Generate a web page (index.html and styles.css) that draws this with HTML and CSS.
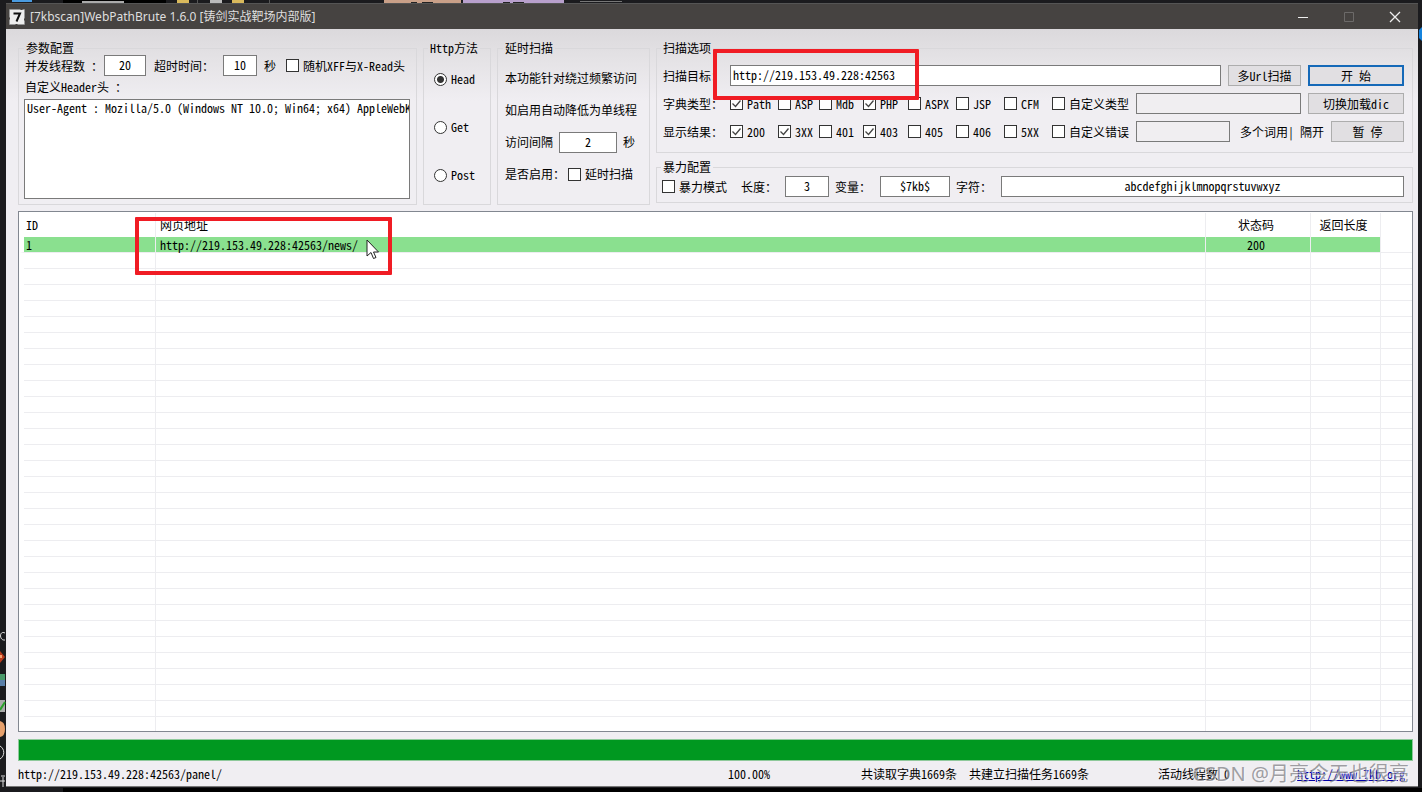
FILE: index.html
```html
<!DOCTYPE html>
<html lang="zh-CN">
<head>
<meta charset="utf-8">
<title>[7kbscan]WebPathBrute 1.6.0</title>
<link rel="stylesheet" href="styles.css">
</head>
<body>
<div class="desktop">
  <svg class="desk-top" width="700" height="3" aria-hidden="true">
    <path fill="#4a9be0" d="M12 0h20v2H12z"/><path fill="#000" d="M63 0h103v3H63z"/><path fill="#aaa" d="M82 1h42v2H82z"/>
    <path fill="#d9b95c" d="M177 0h12v3h-12zM232 0h12v3h-12z"/><path fill="#bbb" d="M210 0h12v3h-12z"/><path fill="#555" d="M197 0h1v3h-1zM269 0h1v3h-1z"/>
    <path fill="#c9a088" d="M384 0h77v3h-77z"/><path fill="#b8a0cc" d="M463 0h101v3H463z"/><path fill="#222" d="M411 2h6v1h-6zM422 2h11v1h-11zM503 2h7v1h-7zM513 2h11v1h-11z"/><path fill="#777" d="M580 1h42v1h-42z"/>
  </svg>
  <svg class="desk-left" width="6" height="200" viewBox="0 600 6 200" aria-hidden="true">
    <path fill="none" stroke="#ddd" d="M5 633C-1 630-1 641 5 640M0 746c5 3 5 10 0 13M1 776h4M0 781h5M3 777v10"/>
    <path fill="#b83b1d" d="M0 651l5 6-5 6z"/><path fill="#f5a070" d="M0 655h2v3H0z"/>
    <path fill="#4a9a6a" d="M0 674h5v6H0z"/><path fill="#5a7fa8" d="M0 680h5v6H0z"/>
    <path fill="#aaa" d="M0 700h5v12H0z"/><path fill="none" stroke="#2aa02a" stroke-width="2" d="M0 710l5-8"/>
    <path fill="#e6a06c" d="M0 721q5 1 5 8t-5 8z"/>
  </svg>
  <svg class="desk-right" width="4" height="20" aria-hidden="true"><path fill="#1583dd" d="M4 1L1 4v8l3 3z"/></svg>
  <div class="desk-bottom"></div>

  <main class="window">
    <header class="titlebar">
      <svg width="16" height="16" viewBox="0 0 16 16" aria-hidden="true"><path fill="#eee" d="M1 1h14v14H1z"/><path fill="none" stroke="#999" stroke-dasharray="11 2" d="M.5.5h15v15H.5z"/><path fill="none" stroke="#111" stroke-width="2" d="M4.500 4.500h6.500L7.500 12.500"/></svg>
      <h1 class="title">[7kbscan]WebPathBrute 1.6.0 [铸剑实战靶场内部版]</h1>
      <button class="winbtn" aria-label="最小化"><svg width="12" height="12"><path stroke="#eee" d="M1 6.500h10"/></svg></button>
      <button class="winbtn" aria-label="最大化" disabled><svg width="12" height="12"><path fill="none" stroke="#6c6a69" d="M1.500 1.500h9v9h-9z"/></svg></button>
      <button class="winbtn" aria-label="关闭"><svg width="12" height="12"><path stroke="#eee" stroke-width="1.300" d="M1 1l10 10M11 1L1 11"/></svg></button>
    </header>

    <div class="content">
      <div class="panels">
        <fieldset class="group params">
          <legend>参数配置</legend>
          <div class="row">
            <label class="lbl-threads" for="threads">并发线程数 ：</label>
            <input class="box center w42" id="threads" value="20">
            <label class="lbl-timeout" for="timeout">超时时间：</label>
            <input class="box center w34" id="timeout" value="10">
            <span class="unit">秒</span>
            <label class="opt"><input type="checkbox">随机XFF与X-Read头</label>
          </div>
          <label class="header-label" for="headers">自定义Header头 ：</label>
          <textarea class="headers" id="headers" wrap="off">User-Agent : Mozilla/5.0 (Windows NT 10.0; Win64; x64) AppleWebKit/537.36</textarea>
        </fieldset>

        <fieldset class="group methods">
          <legend>Http方法</legend>
          <label class="opt"><input type="radio" name="m" checked>Head</label>
          <label class="opt"><input type="radio" name="m">Get</label>
          <label class="opt"><input type="radio" name="m">Post</label>
        </fieldset>

        <fieldset class="group delay">
          <legend>延时扫描</legend>
          <p>本功能针对绕过频繁访问</p>
          <p>如启用自动降低为单线程</p>
          <div class="delay-row"><label for="gap">访问间隔</label><input class="box center w58" id="gap" value="2"><span>秒</span></div>
          <div class="delay-row delay-toggle"><span>是否启用：</span><label class="opt"><input type="checkbox">延时扫描</label></div>
        </fieldset>

        <div class="right-groups">
          <fieldset class="group scan">
            <legend>扫描选项</legend>
            <div class="row">
              <label class="name" for="target">扫描目标：</label>
              <input class="box grow" id="target" value="http://219.153.49.228:42563">
              <button class="btn narrow">多Url扫描</button>
              <button class="btn wide primary">开 始</button>
            </div>
            <div class="row">
              <span class="name">字典类型：</span>
              <div class="checks">
                <label class="opt"><input type="checkbox" checked>Path</label>
                <label class="opt"><input type="checkbox">ASP</label>
                <label class="opt"><input type="checkbox">Mdb</label>
                <label class="opt"><input type="checkbox" checked>PHP</label>
                <label class="opt"><input type="checkbox">ASPX</label>
                <label class="opt"><input type="checkbox">JSP</label>
                <label class="opt"><input type="checkbox">CFM</label>
                <label class="opt"><input type="checkbox">自定义类型</label>
              </div>
              <input class="box grow" aria-label="自定义类型" disabled>
              <button class="btn wide">切换加载dic</button>
            </div>
            <div class="row">
              <span class="name">显示结果：</span>
              <div class="checks">
                <label class="opt"><input type="checkbox" checked>200</label>
                <label class="opt"><input type="checkbox" checked>3XX</label>
                <label class="opt"><input type="checkbox">401</label>
                <label class="opt"><input type="checkbox" checked>403</label>
                <label class="opt"><input type="checkbox">405</label>
                <label class="opt"><input type="checkbox">406</label>
                <label class="opt"><input type="checkbox">5XX</label>
                <label class="opt"><input type="checkbox">自定义错误</label>
              </div>
              <input class="box grow" aria-label="自定义错误" disabled>
              <span class="hint">多个词用| 隔开</span>
              <button class="btn narrow">暂 停</button>
            </div>
            <div class="mark mark-target"></div>
          </fieldset>

          <fieldset class="group brute">
            <legend>暴力配置</legend>
            <div class="row">
              <label class="opt brute-mode"><input type="checkbox">暴力模式</label>
              <label class="brute-name" for="len">长度：</label><input class="box center w44" id="len" value="3">
              <label class="brute-name" for="var">变量：</label><input class="box center w70" id="var" value="$7kb$">
              <label class="brute-name" for="chars">字符：</label><input class="box center grow" id="chars" value="abcdefghijklmnopqrstuvwxyz">
            </div>
          </fieldset>
        </div>
      </div>

      <section class="results">
        <table class="grid">
          <colgroup><col class="c-id"><col><col class="c-code"><col class="c-len"><col class="c-rest"></colgroup>
          <thead><tr><th>ID</th><th>网页地址</th><th class="mid">状态码</th><th class="mid">返回长度</th><th></th></tr></thead>
          <tbody>
            <tr class="hit"><td>1</td><td>http://219.153.49.228:42563/news/</td><td class="mid">200</td><td></td><td></td></tr>
            <tr class="blank"><td></td><td></td><td></td><td></td><td></td></tr>
          </tbody>
        </table>
        <div class="mark mark-result"></div>
        <svg class="cursor" width="14" height="22" viewBox="0 0 14 22" aria-hidden="true"><path fill="#fff" stroke="#222" d="M1 1v16l4-3.500 2.500 6 2.500-1-2.500-5.500h5z"/></svg>
      </section>

      <progress class="bar" max="100" value="100" aria-label="进度"></progress>

      <footer class="status">
        <span>http://219.153.49.228:42563/panel/</span>
        <span>100.00%</span>
        <span>共读取字典1669条</span>
        <span>共建立扫描任务1669条</span>
        <span>活动线程数 0</span>
        <a href="#">http://www.7kb.org</a>
      </footer>
    </div>
  </main>
  <div class="watermark">CSDN @月亮今天也很亮</div>
</div>
</body>
</html>
```
FILE: styles.css
```css
* { box-sizing: border-box; }
body { margin: 0; }
body, input, button, textarea {
  font: 12px/14px "Noto Sans Mono CJK SC", "Liberation Mono", "Noto Sans CJK SC", monospace;
  color: #000;
}
h1, p { margin: 0; font: inherit; }

.desktop {
  position: relative;
  display: flex;
  min-height: 100vh;
  padding: 3px 4px 5px 6px;
  background: #1b1b1e;
}
.desk-top { position: absolute; left: 0; top: 0; }
.desk-left { position: absolute; left: 0; bottom: -8px; }
.desk-right { position: absolute; right: 0; top: 26px; }
.desk-bottom { position: absolute; left: 63px; right: 0; bottom: 0; height: 4px; background: #000; }

.window { flex: 1; display: flex; flex-direction: column; min-width: 0; position: relative; border-bottom: 1px solid #777; }
.titlebar {
  display: flex;
  align-items: center;
  height: 26px;
  padding-left: 3px;
  background: #464341;
  border-top: 1px solid #555;
}
.title { flex: 1; padding-left: 5px; color: #dedede; font: 12px/16px "Noto Sans", "Noto Sans CJK SC", sans-serif; }
.winbtn { width: 46px; height: 25px; padding: 0; border: 0; background: none; display: flex; align-items: center; justify-content: center; }

.content {
  flex: 1;
  display: flex;
  flex-direction: column;
  padding: 12px 5px 5px 12px;
  background: linear-gradient(#dbd9dc, #e5e3e6 32px, #f0eef2 72px);
}
.panels { display: flex; gap: 6px; height: 164px; }
.group { margin: 0; padding: 0; min-width: 0; border: 1px solid #d9d8db; position: relative; }
.group legend { padding: 0 2px; height: 14px; white-space: nowrap; }
.row { display: flex; align-items: center; height: 21px; white-space: nowrap; }

.box { height: 21px; padding: 0 2px 2px; border: 1px solid #7a7a7a; background: #fff; border-radius: 0; min-width: 0; }
.box:disabled { background: #f0eef1; }
.center { text-align: center; }
.grow { flex: 1; }
.w34 { width: 34px; }
.w42 { width: 42px; }
.w44 { width: 44px; }
.w58 { width: 58px; }
.w70 { width: 70px; }

.opt { display: flex; align-items: center; gap: 4px; white-space: nowrap; }
.opt input { appearance: none; flex: none; width: 13px; height: 13px; margin: 0; border: 1px solid #333; background: #fff; }
.opt input[type="checkbox"]:checked {
  background: #fff url("data:image/svg+xml,%3Csvg xmlns='http://www.w3.org/2000/svg' width='11' height='11'%3E%3Cpath d='M1.500 5.500l3 3 5-6' fill='none' stroke='%23444' stroke-width='1.300'/%3E%3C/svg%3E");
}
.opt input[type="radio"] { border-radius: 50%; }
.opt input[type="radio"]:checked { background: radial-gradient(circle, #333 3px, #fff 4px); }

.params { width: 399px; padding: 0 6px 5px 5px; display: flex; flex-direction: column; }
.lbl-threads { width: 80px; padding-left: 1px; }
.lbl-timeout { width: 77px; padding-left: 8px; }
.unit { width: 29px; padding-left: 7px; }
.header-label { margin: 4px 1px 5px; }
.headers { flex: 1; resize: none; overflow: hidden; padding: 1px 2px; border: 1px solid #7a7a7a; background: #fff; border-radius: 0; }

.methods { width: 68px; }
.methods legend { margin-left: 4px; }
.methods .opt { height: 48px; padding-left: 10px; }

.delay { width: 153px; padding: 7px 0 0 7px; }
.delay legend { margin-left: -2px; }
.delay p { height: 32px; line-height: 32px; white-space: nowrap; }
.delay-row { display: flex; align-items: center; gap: 6px; height: 32px; white-space: nowrap; }
.delay-toggle { gap: 3px; }

.right-groups { flex: 1; display: flex; flex-direction: column; gap: 7px; min-width: 0; }
.scan { padding: 10px 8px 10px 6px; }
.scan legend { margin-left: -2px; }
.scan .row + .row { margin-top: 7px; }
.name { width: 67px; }
.checks { display: grid; grid-template-columns: 48px 41px 44px 45px 48px 48px 48px 84px; }
.btn { height: 21px; margin-left: 7px; padding: 0; border: 1px solid #adadad; background: #e1dfe2; border-radius: 0; }
.narrow { width: 73px; }
.wide { width: 96px; }
.primary { border: 2px solid #1569b8; }
.hint { padding-left: 10px; }
.brute { padding: 2px 8px 5px 5px; }
.brute legend { margin-left: -1px; }
.brute-mode { width: 79px; }
.brute-name { width: 44px; }
.box + .brute-name { width: 51px; padding-left: 6px; }

.results { flex: 1; display: flex; position: relative; margin-top: 6px; padding: 1px 0 0 1px; border: 1px solid #828790; background: #fff; }
.grid { flex: 1; table-layout: fixed; border-collapse: separate; border-spacing: 0; width: 100%; }
.grid th, .grid td { padding: 0 0 0 4px; border-right: 1px solid #ededf0; text-align: left; font-weight: normal; white-space: nowrap; }
.grid th:last-child, .grid td:last-child { border-right: 0; }
.grid .mid { text-align: center; padding: 0 4px 0 0; }
.grid thead th { height: 24px; }
.c-id { width: 136px; }
.c-code { width: 105px; }
.c-len { width: 70px; }
.c-rest { width: 31px; }
.hit td { height: 16px; border-bottom: 1px solid #ededf0; background: #8ae08f; }
.hit td:last-child { background: #fff; }
.blank td { height: 100%; background: repeating-linear-gradient(#fff 0 15px, #ededf0 15px 16px); }
.grid th:first-child, .grid td:first-child { border-left: 4px solid #fff; padding-left: 2px; }

.mark { position: absolute; border: 4px solid #f01c24; border-radius: 1px; pointer-events: none; }
.mark-target { left: 56px; top: -6px; width: 206px; height: 51px; }
.mark-result { left: 116px; top: 5px; width: 257px; height: 58px; }
.cursor { position: absolute; left: 347px; top: 27px; }

.bar { appearance: none; display: block; width: 100%; height: 22px; margin-top: 7px; border: 1px solid #8fc99b; background: #009820; }
.bar::-webkit-progress-bar { background: #009820; }
.bar::-webkit-progress-value { background: #009820; }

.status { display: grid; grid-template-columns: 710fr 133fr 108fr 189fr 139fr 116fr; margin-top: 6px; white-space: nowrap; }
.status span, .status a { min-width: 0; }
.status a { color: #0000a8; }
.watermark {
  position: absolute;
  right: 13px;
  bottom: 6px;
  color: rgba(120, 120, 125, .7);
  text-shadow: 1px 1px 0 rgba(255, 255, 255, .6);
  font: 20px/24px "Noto Sans", "Noto Sans CJK SC", sans-serif;
  pointer-events: none;
}
```
